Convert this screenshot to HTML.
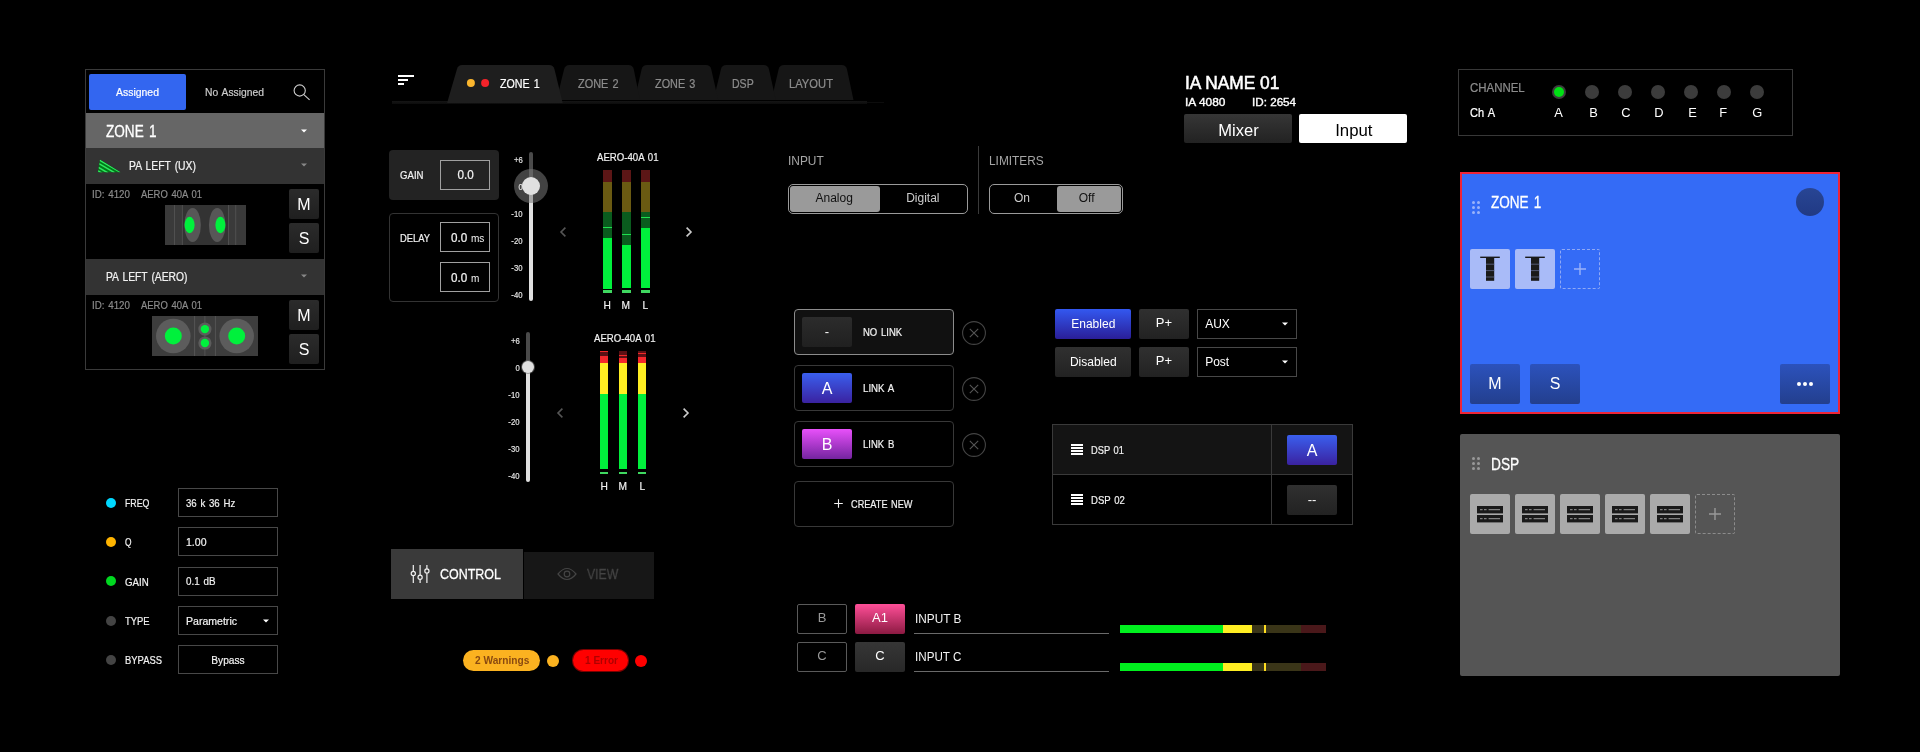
<!DOCTYPE html>
<html lang="en"><head><meta charset="utf-8"><title>Audio Control UI</title>
<style>
*{box-sizing:border-box;margin:0;padding:0}
html,body{width:1920px;height:752px;background:#000;overflow:hidden}
body{position:relative;font-family:"Liberation Sans",sans-serif;color:#fff}
#app{position:absolute;left:0;top:0;width:1920px;height:752px;overflow:hidden;will-change:transform}
#app div,#app span.t,#app svg{position:absolute}
span.t{white-space:pre;display:block}
</style></head><body><div id="app">
<div style="left:85px;top:69px;width:240px;height:301px;border:1px solid #3a3a3a;"></div>
<div style="left:89px;top:74px;width:97px;height:36px;background:#3366f0;border-radius:2px;"></div>
<span class="t" style="left:116.30px;top:82.00px;height:20px;line-height:20px;font-size:11.58px;color:#fff;transform:scaleX(0.9026);transform-origin:left center;-webkit-text-stroke:0.21px #fff;">Assigned</span>
<span class="t" style="left:204.50px;top:82.00px;height:20px;line-height:20px;font-size:11.58px;color:#ccc;word-spacing:1.27px;transform:scaleX(0.8900);transform-origin:left center;-webkit-text-stroke:0.21px #ccc;">No Assigned</span>
<svg style="left:290px;top:81px" width="24" height="24" viewBox="0 0 24 24"><circle cx="9.7" cy="9.5" r="5.6" fill="none" stroke="#ccc" stroke-width="1.1"/><path d="M13.8 13.6 L19.6 18.8" stroke="#ccc" stroke-width="1.1" fill="none"/></svg>
<div style="left:86px;top:113px;width:238px;height:35px;background:#666;"></div>
<span class="t" style="left:105.50px;top:121.00px;height:20px;line-height:20px;font-size:16.41px;color:#fff;word-spacing:1.81px;transform:scaleX(0.8268);transform-origin:left center;-webkit-text-stroke:0.30px #fff;">ZONE 1</span>
<svg style="left:299px;top:125.5px" width="10" height="10" viewBox="0 0 10 10"><path d="M2 3.5 L8 3.5 L5 6.5 Z" fill="#fff"/></svg>
<div style="left:86px;top:148px;width:238px;height:36px;background:#333;"></div>
<svg style="left:96px;top:158px" width="26" height="16" viewBox="96 158 26 16"><defs><clipPath id="tri"><path d="M100 159.6 L120.4 172.3 L98 172.3 Z"/></clipPath></defs><path d="M100 159.6 L120.4 172.3 L98 172.3 Z" fill="#007a18"/><g clip-path="url(#tri)" stroke="#2fe860" stroke-width="1.5"><path d="M99 159.8 L121 172.6"/><path d="M99 163.6 L114.5 172.6"/><path d="M98 167.2 L108 173"/><path d="M97 170.4 L102 173.2"/></g></svg>
<span class="t" style="left:128.50px;top:155.50px;height:20px;line-height:20px;font-size:12.54px;color:#f2f2f2;word-spacing:1.38px;transform:scaleX(0.8268);transform-origin:left center;-webkit-text-stroke:0.23px #f2f2f2;">PA LEFT (UX)</span>
<svg style="left:299px;top:160px" width="10" height="10" viewBox="0 0 10 10"><path d="M2 3.5 L8 3.5 L5 6.5 Z" fill="#888"/></svg>
<span class="t" style="left:91.50px;top:184.00px;height:20px;line-height:20px;font-size:10.62px;color:#8c8c8c;word-spacing:1.17px;transform:scaleX(0.9197);transform-origin:left center;-webkit-text-stroke:0.19px #8c8c8c;">ID: 4120</span>
<span class="t" style="left:141.30px;top:184.00px;height:20px;line-height:20px;font-size:10.62px;color:#8c8c8c;word-spacing:1.17px;transform:scaleX(0.8910);transform-origin:left center;-webkit-text-stroke:0.19px #8c8c8c;">AERO 40A 01</span>
<div style="left:289px;top:189px;width:30px;height:30px;background:linear-gradient(#2b2b2b,#1f1f1f);border-radius:2px;"></div>
<span class="t" style="left:297.34px;top:194.60px;height:20px;line-height:20px;font-size:16px;color:#fff;">M</span>
<div style="left:289px;top:223px;width:30px;height:30px;background:linear-gradient(#2b2b2b,#1f1f1f);border-radius:2px;"></div>
<span class="t" style="left:298.66px;top:228.60px;height:20px;line-height:20px;font-size:16px;color:#fff;">S</span>
<svg style="left:165px;top:205px" width="81" height="40" viewBox="165 205 81 40"><rect x="165" y="205" width="81" height="40" fill="#3a3a3a"/><rect x="182.4" y="205" width="46" height="40" fill="#333"/><g stroke="#555" stroke-width="0.8"><path d="M174.5 205V245M182.4 205V245M228.5 205V245M235.7 205V245"/></g><ellipse cx="192.6" cy="225" rx="8.3" ry="17" fill="#575757"/><ellipse cx="217.2" cy="225" rx="8.3" ry="17" fill="#575757"/><ellipse cx="189.6" cy="225" rx="5" ry="8.3" fill="#00f03c"/><ellipse cx="220.4" cy="225" rx="5" ry="8.3" fill="#00f03c"/></svg>
<div style="left:86px;top:259px;width:238px;height:36px;background:#333;"></div>
<span class="t" style="left:105.50px;top:266.50px;height:20px;line-height:20px;font-size:12.54px;color:#f2f2f2;word-spacing:1.38px;transform:scaleX(0.8219);transform-origin:left center;-webkit-text-stroke:0.23px #f2f2f2;">PA LEFT (AERO)</span>
<svg style="left:299px;top:271px" width="10" height="10" viewBox="0 0 10 10"><path d="M2 3.5 L8 3.5 L5 6.5 Z" fill="#888"/></svg>
<span class="t" style="left:91.50px;top:295.00px;height:20px;line-height:20px;font-size:10.62px;color:#8c8c8c;word-spacing:1.17px;transform:scaleX(0.9197);transform-origin:left center;-webkit-text-stroke:0.19px #8c8c8c;">ID: 4120</span>
<span class="t" style="left:141.30px;top:295.00px;height:20px;line-height:20px;font-size:10.62px;color:#8c8c8c;word-spacing:1.17px;transform:scaleX(0.8910);transform-origin:left center;-webkit-text-stroke:0.19px #8c8c8c;">AERO 40A 01</span>
<div style="left:289px;top:300px;width:30px;height:30px;background:linear-gradient(#2b2b2b,#1f1f1f);border-radius:2px;"></div>
<span class="t" style="left:297.34px;top:305.60px;height:20px;line-height:20px;font-size:16px;color:#fff;">M</span>
<div style="left:289px;top:334px;width:30px;height:30px;background:linear-gradient(#2b2b2b,#1f1f1f);border-radius:2px;"></div>
<span class="t" style="left:298.66px;top:339.60px;height:20px;line-height:20px;font-size:16px;color:#fff;">S</span>
<svg style="left:152px;top:316px" width="106" height="40" viewBox="152 316 106 40"><rect x="152" y="316" width="106" height="40" fill="#3d3d3d"/><g stroke="#5a5a5a" stroke-width="0.8"><path d="M194.6 316V356M204.9 316V356M215.4 316V356"/></g><circle cx="173.3" cy="336" r="17.3" fill="#5c5c5c"/><circle cx="236.7" cy="336" r="17.3" fill="#5c5c5c"/><circle cx="173.3" cy="336" r="8.5" fill="#00f03c"/><circle cx="236.7" cy="336" r="8.5" fill="#00f03c"/><circle cx="204.9" cy="329.1" r="6.6" fill="#5c5c5c"/><circle cx="204.9" cy="343" r="6.6" fill="#5c5c5c"/><circle cx="204.9" cy="329.1" r="4.2" fill="#00f03c"/><circle cx="204.9" cy="343" r="4.2" fill="#00f03c"/></svg>
<div style="left:106px;top:497.7px;width:10px;height:10px;background:#00d8ff;border-radius:50%;"></div>
<span class="t" style="left:125.40px;top:493.00px;height:20px;line-height:20px;font-size:11.58px;color:#f2f2f2;transform:scaleX(0.7585);transform-origin:left center;-webkit-text-stroke:0.21px #f2f2f2;">FREQ</span>
<div style="left:178px;top:488px;width:100px;height:29px;border:1px solid #484848;"></div>
<div style="left:106px;top:536.5px;width:10px;height:10px;background:#ffb400;border-radius:50%;"></div>
<span class="t" style="left:125.40px;top:531.80px;height:20px;line-height:20px;font-size:11.58px;color:#f2f2f2;transform:scaleX(0.7216);transform-origin:left center;-webkit-text-stroke:0.21px #f2f2f2;">Q</span>
<div style="left:178px;top:527px;width:100px;height:29px;border:1px solid #484848;"></div>
<div style="left:106px;top:576.2px;width:10px;height:10px;background:#00d820;border-radius:50%;"></div>
<span class="t" style="left:125.40px;top:571.50px;height:20px;line-height:20px;font-size:11.58px;color:#f2f2f2;transform:scaleX(0.8371);transform-origin:left center;-webkit-text-stroke:0.21px #f2f2f2;">GAIN</span>
<div style="left:178px;top:566.5px;width:100px;height:29px;border:1px solid #484848;"></div>
<div style="left:106px;top:615.6px;width:10px;height:10px;background:#444;border-radius:50%;"></div>
<span class="t" style="left:125.40px;top:610.90px;height:20px;line-height:20px;font-size:11.58px;color:#f2f2f2;transform:scaleX(0.8134);transform-origin:left center;-webkit-text-stroke:0.21px #f2f2f2;">TYPE</span>
<div style="left:178px;top:606px;width:100px;height:29px;border:1px solid #484848;"></div>
<div style="left:106px;top:654.6px;width:10px;height:10px;background:#444;border-radius:50%;"></div>
<span class="t" style="left:125.40px;top:649.90px;height:20px;line-height:20px;font-size:11.58px;color:#f2f2f2;transform:scaleX(0.8135);transform-origin:left center;-webkit-text-stroke:0.21px #f2f2f2;">BYPASS</span>
<div style="left:178px;top:645px;width:100px;height:29px;border:1px solid #484848;"></div>
<span class="t" style="left:186.40px;top:492.50px;height:20px;line-height:20px;font-size:11.58px;color:#f2f2f2;word-spacing:1.27px;transform:scaleX(0.8316);transform-origin:left center;-webkit-text-stroke:0.21px #f2f2f2;">36 k 36 Hz</span>
<span class="t" style="left:186.40px;top:531.50px;height:20px;line-height:20px;font-size:11.58px;color:#f2f2f2;transform:scaleX(0.9096);transform-origin:left center;-webkit-text-stroke:0.21px #f2f2f2;">1.00</span>
<span class="t" style="left:186.40px;top:570.50px;height:20px;line-height:20px;font-size:11.58px;color:#f2f2f2;word-spacing:1.27px;transform:scaleX(0.8489);transform-origin:left center;-webkit-text-stroke:0.21px #f2f2f2;">0.1 dB</span>
<span class="t" style="left:186.40px;top:610.50px;height:20px;line-height:20px;font-size:11.58px;color:#f2f2f2;transform:scaleX(0.9110);transform-origin:left center;-webkit-text-stroke:0.21px #f2f2f2;">Parametric</span>
<svg style="left:261px;top:615.5px" width="10" height="10" viewBox="0 0 10 10"><path d="M2 3.5 L8 3.5 L5 6.5 Z" fill="#fff"/></svg>
<span class="t" style="left:208.71px;top:649.80px;height:20px;line-height:20px;font-size:11.58px;color:#f2f2f2;transform:scaleX(0.8795);transform-origin:center center;-webkit-text-stroke:0.21px #f2f2f2;">Bypass</span>
<div style="left:398px;top:75px;width:16px;height:2px;background:#fff;"></div>
<div style="left:398px;top:79px;width:10px;height:2px;background:#fff;"></div>
<div style="left:398px;top:83px;width:5.5px;height:2px;background:#fff;"></div>
<div style="left:392px;top:101px;width:475px;height:3px;background:linear-gradient(#151515,#0c0c0c);"></div>
<div style="left:867px;top:102px;width:17px;height:1px;background:#0c0c0c;"></div>
<svg style="left:440px;top:60px" width="430" height="50" viewBox="440 60 430 50"><path d="M771.5 100 L778.6999999999999 69 Q779.9 65 783.9 65 L841.7 65 Q845.7 65 846.9000000000001 69 L853.5 100 Z" fill="#161616"/><path d="M713.5 100 L721.0 69 Q722.2 65 726.2 65 L763.7 65 Q767.7 65 768.9000000000001 69 L775.8 100 Z" fill="#161616"/><path d="M634.5 100 L641.6999999999999 69 Q642.9 65 646.9 65 L706 65 Q710 65 711.2 69 L718.2 100 Z" fill="#161616"/><path d="M556.5 100 L564.1999999999999 69 Q565.4 65 569.4 65 L628.5 65 Q632.5 65 633.7 69 L640 100 Z" fill="#161616"/><path d="M447.1 103 L457.0 69 Q458.2 65 462.2 65 L549.2 65 Q553.2 65 554.4000000000001 69 L562.7 103 Z" fill="#1e1e1e"/><circle cx="470.9" cy="83.1" r="4" fill="#fbb62e"/><circle cx="485.1" cy="83.1" r="4" fill="#f4232a"/></svg>
<span class="t" style="left:500.30px;top:73.70px;height:20px;line-height:20px;font-size:12.54px;color:#fff;word-spacing:1.38px;transform:scaleX(0.8506);transform-origin:left center;-webkit-text-stroke:0.23px #fff;">ZONE 1</span>
<span class="t" style="left:578.30px;top:73.70px;height:20px;line-height:20px;font-size:12.54px;color:#8c8c8c;word-spacing:1.38px;transform:scaleX(0.8720);transform-origin:left center;-webkit-text-stroke:0.23px #8c8c8c;">ZONE 2</span>
<span class="t" style="left:655.10px;top:73.70px;height:20px;line-height:20px;font-size:12.54px;color:#8c8c8c;word-spacing:1.38px;transform:scaleX(0.8656);transform-origin:left center;-webkit-text-stroke:0.23px #8c8c8c;">ZONE 3</span>
<span class="t" style="left:732.40px;top:73.70px;height:20px;line-height:20px;font-size:12.54px;color:#8c8c8c;transform:scaleX(0.8416);transform-origin:left center;-webkit-text-stroke:0.23px #8c8c8c;">DSP</span>
<span class="t" style="left:789.40px;top:73.70px;height:20px;line-height:20px;font-size:12.54px;color:#8c8c8c;transform:scaleX(0.8935);transform-origin:left center;-webkit-text-stroke:0.23px #8c8c8c;">LAYOUT</span>
<div style="left:389px;top:150px;width:110px;height:50px;background:#232323;border-radius:4px;"></div>
<span class="t" style="left:399.50px;top:165.00px;height:20px;line-height:20px;font-size:11.58px;color:#f2f2f2;transform:scaleX(0.8301);transform-origin:left center;-webkit-text-stroke:0.21px #f2f2f2;">GAIN</span>
<div style="left:440px;top:160px;width:50px;height:30px;border:1px solid #a0a0a0;"></div>
<span class="t" style="left:456.58px;top:165.00px;height:20px;line-height:20px;font-size:12.54px;color:#f2f2f2;transform:scaleX(0.9293);transform-origin:center center;-webkit-text-stroke:0.23px #f2f2f2;">0.0</span>
<div style="left:389px;top:213px;width:110px;height:89px;border:1px solid #333;border-radius:4px;"></div>
<span class="t" style="left:399.50px;top:228.00px;height:20px;line-height:20px;font-size:11.58px;color:#f2f2f2;transform:scaleX(0.8083);transform-origin:left center;-webkit-text-stroke:0.21px #f2f2f2;">DELAY</span>
<div style="left:440px;top:222px;width:50px;height:30px;border:1px solid #a0a0a0;"></div>
<div style="left:440px;top:262px;width:50px;height:30px;border:1px solid #a0a0a0;"></div>
<span class="t" style="left:451.20px;top:227.50px;height:20px;line-height:20px;font-size:12.54px;color:#f2f2f2;transform:scaleX(0.9293);transform-origin:left center;-webkit-text-stroke:0.23px #f2f2f2;">0.0</span>
<span class="t" style="left:471.00px;top:228.50px;height:20px;line-height:20px;font-size:10px;color:#f2f2f2;transform:scaleX(1.0052);transform-origin:left center;">ms</span>
<span class="t" style="left:451.20px;top:267.50px;height:20px;line-height:20px;font-size:12.54px;color:#f2f2f2;transform:scaleX(0.9293);transform-origin:left center;-webkit-text-stroke:0.23px #f2f2f2;">0.0</span>
<span class="t" style="left:471.00px;top:268.50px;height:20px;line-height:20px;font-size:10px;color:#f2f2f2;">m</span>
<div style="left:529px;top:152px;width:4px;height:34px;background:#4a4a4a;border-radius:2px 2px 0 0;"></div>
<div style="left:529px;top:186px;width:4px;height:115px;background:#e0e0e0;border-radius:0 0 2px 2px;"></div>
<div style="left:514px;top:169px;width:34px;height:34px;background:rgba(120,120,120,.55);border-radius:50%;"></div>
<div style="left:522px;top:177px;width:18px;height:18px;background:#e0e0e0;border-radius:50%;"></div>
<span class="t" style="left:513.09px;top:150.00px;height:20px;line-height:20px;font-size:8.69px;color:#e6e6e6;transform:scaleX(0.8907);transform-origin:right center;-webkit-text-stroke:0.16px #e6e6e6;">+6</span>
<span class="t" style="left:518.17px;top:176.50px;height:20px;line-height:20px;font-size:8.69px;color:#e6e6e6;transform:scaleX(0.8907);transform-origin:right center;-webkit-text-stroke:0.16px #e6e6e6;">0</span>
<span class="t" style="left:510.44px;top:204.00px;height:20px;line-height:20px;font-size:8.69px;color:#e6e6e6;transform:scaleX(0.8907);transform-origin:right center;-webkit-text-stroke:0.16px #e6e6e6;">-10</span>
<span class="t" style="left:510.44px;top:231.00px;height:20px;line-height:20px;font-size:8.69px;color:#e6e6e6;transform:scaleX(0.8907);transform-origin:right center;-webkit-text-stroke:0.16px #e6e6e6;">-20</span>
<span class="t" style="left:510.44px;top:258.00px;height:20px;line-height:20px;font-size:8.69px;color:#e6e6e6;transform:scaleX(0.8907);transform-origin:right center;-webkit-text-stroke:0.16px #e6e6e6;">-30</span>
<span class="t" style="left:510.44px;top:285.00px;height:20px;line-height:20px;font-size:8.69px;color:#e6e6e6;transform:scaleX(0.8907);transform-origin:right center;-webkit-text-stroke:0.16px #e6e6e6;">-40</span>
<div style="left:526px;top:332px;width:4px;height:35.30000000000001px;background:#4a4a4a;border-radius:2px 2px 0 0;"></div>
<div style="left:526px;top:367.3px;width:4px;height:114.69999999999999px;background:#e0e0e0;border-radius:0 0 2px 2px;"></div>
<div style="left:522px;top:361.3px;width:12px;height:12px;background:#e0e0e0;border-radius:50%;box-shadow:0 0 0 1px rgba(120,120,120,.6);"></div>
<span class="t" style="left:510.09px;top:331.00px;height:20px;line-height:20px;font-size:8.69px;color:#e6e6e6;transform:scaleX(0.8907);transform-origin:right center;-webkit-text-stroke:0.16px #e6e6e6;">+6</span>
<span class="t" style="left:515.17px;top:358.00px;height:20px;line-height:20px;font-size:8.69px;color:#e6e6e6;transform:scaleX(0.8907);transform-origin:right center;-webkit-text-stroke:0.16px #e6e6e6;">0</span>
<span class="t" style="left:507.44px;top:385.00px;height:20px;line-height:20px;font-size:8.69px;color:#e6e6e6;transform:scaleX(0.8907);transform-origin:right center;-webkit-text-stroke:0.16px #e6e6e6;">-10</span>
<span class="t" style="left:507.44px;top:412.00px;height:20px;line-height:20px;font-size:8.69px;color:#e6e6e6;transform:scaleX(0.8907);transform-origin:right center;-webkit-text-stroke:0.16px #e6e6e6;">-20</span>
<span class="t" style="left:507.44px;top:439.00px;height:20px;line-height:20px;font-size:8.69px;color:#e6e6e6;transform:scaleX(0.8907);transform-origin:right center;-webkit-text-stroke:0.16px #e6e6e6;">-30</span>
<span class="t" style="left:507.44px;top:466.00px;height:20px;line-height:20px;font-size:8.69px;color:#e6e6e6;transform:scaleX(0.8907);transform-origin:right center;-webkit-text-stroke:0.16px #e6e6e6;">-40</span>
<span class="t" style="left:597.00px;top:147.20px;height:20px;line-height:20px;font-size:11.58px;color:#f2f2f2;word-spacing:1.27px;transform:scaleX(0.8310);transform-origin:left center;-webkit-text-stroke:0.21px #f2f2f2;">AERO-40A 01</span>
<div style="left:603px;top:170px;width:8.5px;height:12px;background:#5c1616;"></div>
<div style="left:603px;top:182px;width:8.5px;height:30px;background:#6a5a12;"></div>
<div style="left:603px;top:212px;width:8.5px;height:26px;background:#0a5c1e;"></div>
<div style="left:603px;top:238px;width:8.5px;height:50.5px;background:#00f03c;"></div>
<div style="left:603px;top:226.8px;width:8.5px;height:1.2px;background:#1fe050;"></div>
<div style="left:603px;top:290.3px;width:8.5px;height:2.8px;background:#3fd860;"></div>
<div style="left:622px;top:170px;width:8.5px;height:12px;background:#5c1616;"></div>
<div style="left:622px;top:182px;width:8.5px;height:30px;background:#6a5a12;"></div>
<div style="left:622px;top:212px;width:8.5px;height:32.599999999999994px;background:#0a5c1e;"></div>
<div style="left:622px;top:244.6px;width:8.5px;height:43.900000000000006px;background:#00f03c;"></div>
<div style="left:622px;top:233.70000000000002px;width:8.5px;height:1.2px;background:#1fe050;"></div>
<div style="left:622px;top:290.3px;width:8.5px;height:2.8px;background:#3fd860;"></div>
<div style="left:641px;top:170px;width:8.5px;height:12px;background:#5c1616;"></div>
<div style="left:641px;top:182px;width:8.5px;height:30px;background:#6a5a12;"></div>
<div style="left:641px;top:212px;width:8.5px;height:15.800000000000011px;background:#0a5c1e;"></div>
<div style="left:641px;top:227.8px;width:8.5px;height:60.69999999999999px;background:#00f03c;"></div>
<div style="left:641px;top:216.70000000000002px;width:8.5px;height:1.2px;background:#1fe050;"></div>
<div style="left:641px;top:290.3px;width:8.5px;height:2.8px;background:#3fd860;"></div>
<span class="t" style="left:602.82px;top:295.20px;height:20px;line-height:20px;font-size:11.58px;color:#f2f2f2;transform:scaleX(0.8808);transform-origin:center center;-webkit-text-stroke:0.21px #f2f2f2;">H</span>
<span class="t" style="left:621.38px;top:295.20px;height:20px;line-height:20px;font-size:11.58px;color:#f2f2f2;transform:scaleX(0.8808);transform-origin:center center;-webkit-text-stroke:0.21px #f2f2f2;">M</span>
<span class="t" style="left:642.38px;top:295.20px;height:20px;line-height:20px;font-size:11.58px;color:#f2f2f2;transform:scaleX(0.8808);transform-origin:center center;-webkit-text-stroke:0.21px #f2f2f2;">L</span>
<svg style="left:555px;top:223.5px" width="16" height="16" viewBox="-8 -8 16 16"><path d="M2.4 -4.4 L-2 0 L2.4 4.4" fill="none" stroke="#555" stroke-width="1.6"/></svg>
<svg style="left:681px;top:223.5px" width="16" height="16" viewBox="-8 -8 16 16"><path d="M-2.4 -4.4 L2 0 L-2.4 4.4" fill="none" stroke="#ccc" stroke-width="1.6"/></svg>
<span class="t" style="left:594.10px;top:328.00px;height:20px;line-height:20px;font-size:11.58px;color:#f2f2f2;word-spacing:1.27px;transform:scaleX(0.8310);transform-origin:left center;-webkit-text-stroke:0.21px #f2f2f2;">AERO-40A 01</span>
<div style="left:600px;top:350.6px;width:8.2px;height:12px;background:#5c1014;"></div>
<div style="left:600px;top:350.9px;width:8.2px;height:1.2px;background:#f02828;"></div>
<div style="left:600px;top:356px;width:8.2px;height:6.800000000000011px;background:#f4282c;"></div>
<div style="left:600px;top:362.8px;width:8.2px;height:31.4px;background:#ffee22;"></div>
<div style="left:600px;top:394.2px;width:8.2px;height:74.8px;background:#00f03c;"></div>
<div style="left:600px;top:471.5px;width:8.2px;height:2.8px;background:#3fd860;"></div>
<div style="left:619px;top:350.6px;width:8.2px;height:12px;background:#5c1014;"></div>
<div style="left:619px;top:354.7px;width:8.2px;height:1.2px;background:#f02828;"></div>
<div style="left:619px;top:358.3px;width:8.2px;height:4.5px;background:#f4282c;"></div>
<div style="left:619px;top:362.8px;width:8.2px;height:31.4px;background:#ffee22;"></div>
<div style="left:619px;top:394.2px;width:8.2px;height:74.8px;background:#00f03c;"></div>
<div style="left:619px;top:471.5px;width:8.2px;height:2.8px;background:#3fd860;"></div>
<div style="left:638px;top:350.6px;width:8.2px;height:12px;background:#5c1014;"></div>
<div style="left:638px;top:352.59999999999997px;width:8.2px;height:1.2px;background:#f02828;"></div>
<div style="left:638px;top:357px;width:8.2px;height:5.800000000000011px;background:#f4282c;"></div>
<div style="left:638px;top:362.8px;width:8.2px;height:31.4px;background:#ffee22;"></div>
<div style="left:638px;top:394.2px;width:8.2px;height:74.8px;background:#00f03c;"></div>
<div style="left:638px;top:471.5px;width:8.2px;height:2.8px;background:#3fd860;"></div>
<span class="t" style="left:600.02px;top:475.80px;height:20px;line-height:20px;font-size:11.58px;color:#f2f2f2;transform:scaleX(0.8808);transform-origin:center center;-webkit-text-stroke:0.21px #f2f2f2;">H</span>
<span class="t" style="left:618.48px;top:475.80px;height:20px;line-height:20px;font-size:11.58px;color:#f2f2f2;transform:scaleX(0.8808);transform-origin:center center;-webkit-text-stroke:0.21px #f2f2f2;">M</span>
<span class="t" style="left:639.48px;top:475.80px;height:20px;line-height:20px;font-size:11.58px;color:#f2f2f2;transform:scaleX(0.8808);transform-origin:center center;-webkit-text-stroke:0.21px #f2f2f2;">L</span>
<svg style="left:552px;top:404.6px" width="16" height="16" viewBox="-8 -8 16 16"><path d="M2.4 -4.4 L-2 0 L2.4 4.4" fill="none" stroke="#555" stroke-width="1.6"/></svg>
<svg style="left:678.3px;top:404.6px" width="16" height="16" viewBox="-8 -8 16 16"><path d="M-2.4 -4.4 L2 0 L-2.4 4.4" fill="none" stroke="#ccc" stroke-width="1.6"/></svg>
<div style="left:391px;top:549px;width:132px;height:50px;background:#3a3a3a;"></div>
<div style="left:524px;top:552px;width:130px;height:46.5px;background:#171717;"></div>
<svg style="left:408px;top:562px" width="24" height="24" viewBox="408 562 24 24"><g stroke="#f2f2f2" stroke-width="1.2" fill="none"><path d="M413.3 565V571.3M413.3 575.7V583M420.1 565V575.1M420.1 579.5V583M426.9 565V568.8M426.9 573.2V583"/><circle cx="413.3" cy="573.5" r="2.1"/><circle cx="420.1" cy="577.3" r="2.1"/><circle cx="426.9" cy="571" r="2.1"/></g></svg>
<span class="t" style="left:439.80px;top:564.40px;height:20px;line-height:20px;font-size:15.44px;color:#fff;transform:scaleX(0.8081);transform-origin:left center;-webkit-text-stroke:0.28px #fff;">CONTROL</span>
<svg style="left:555px;top:564px" width="24" height="20" viewBox="555 564 24 20"><g stroke="#444" stroke-width="1.2" fill="none"><path d="M558 574 Q567 563 576 574 Q567 585 558 574 Z"/><circle cx="567" cy="574" r="2.8"/></g></svg>
<span class="t" style="left:586.80px;top:564.40px;height:20px;line-height:20px;font-size:15.44px;color:#444;transform:scaleX(0.7907);transform-origin:left center;-webkit-text-stroke:0.28px #444;">VIEW</span>
<div style="left:463px;top:650px;width:77px;height:21px;background:#fbb220;border-radius:10.5px;"></div>
<span class="t" style="left:474.70px;top:650.10px;height:20px;line-height:20px;font-size:11px;color:#8a4a10;font-weight:700;transform:scaleX(0.9222);transform-origin:left center;">2 Warnings</span>
<div style="left:547px;top:654.7px;width:12px;height:12px;background:#fbb220;border-radius:50%;"></div>
<div style="left:573px;top:650px;width:55px;height:21px;background:#ff0000;border-radius:10.5px;box-shadow:0 0 0 1px #7a0000;"></div>
<span class="t" style="left:584.50px;top:650.10px;height:20px;line-height:20px;font-size:11px;color:#b00000;font-weight:700;transform:scaleX(0.9148);transform-origin:left center;">1 Error</span>
<div style="left:635px;top:654.7px;width:12px;height:12px;background:#ff0000;border-radius:50%;"></div>
<span class="t" style="left:788.10px;top:150.60px;height:20px;line-height:20px;font-size:12px;color:#a6a6a6;transform:scaleX(0.9917);transform-origin:left center;">INPUT</span>
<div style="left:788px;top:184px;width:180px;height:30px;border:1px solid #9a9a9a;border-radius:5px;"></div>
<div style="left:790px;top:186px;width:90px;height:26px;background:#9a9a9a;border-radius:3px;"></div>
<span class="t" style="left:815.52px;top:187.60px;height:20px;line-height:20px;font-size:12px;color:#111;">Analog</span>
<span class="t" style="left:906.13px;top:187.60px;height:20px;line-height:20px;font-size:12px;color:#ccc;">Digital</span>
<div style="left:978px;top:146px;width:1px;height:68px;background:#3a3a3a;"></div>
<span class="t" style="left:989.30px;top:150.60px;height:20px;line-height:20px;font-size:12px;color:#a6a6a6;transform:scaleX(0.9884);transform-origin:left center;">LIMITERS</span>
<div style="left:989px;top:184px;width:134px;height:30px;border:1px solid #9a9a9a;border-radius:5px;"></div>
<div style="left:1057px;top:186px;width:64px;height:26px;background:#9a9a9a;border-radius:3px;"></div>
<span class="t" style="left:1014.00px;top:187.60px;height:20px;line-height:20px;font-size:12px;color:#ccc;">On</span>
<span class="t" style="left:1078.71px;top:187.60px;height:20px;line-height:20px;font-size:12px;color:#111;">Off</span>
<span class="t" style="left:1184.50px;top:72.60px;height:20px;line-height:20px;font-size:18px;color:#fff;transform:scaleX(0.9628);transform-origin:left center;-webkit-text-stroke:0.55px #fff;">IA NAME 01</span>
<span class="t" style="left:1184.50px;top:92.10px;height:20px;line-height:20px;font-size:11px;color:#fff;transform:scaleX(1.0827);transform-origin:left center;-webkit-text-stroke:0.35px #fff;">IA 4080</span>
<span class="t" style="left:1252.00px;top:92.10px;height:20px;line-height:20px;font-size:11px;color:#fff;transform:scaleX(1.0605);transform-origin:left center;-webkit-text-stroke:0.35px #fff;">ID: 2654</span>
<div style="left:1184px;top:114px;width:108px;height:29px;background:linear-gradient(#363636,#222);border-radius:2px;"></div>
<span class="t" style="left:1219.05px;top:120.90px;height:20px;line-height:20px;font-size:16px;color:#fff;transform:scaleX(1.0330);transform-origin:center center;">Mixer</span>
<div style="left:1299px;top:114px;width:108px;height:29px;background:#fff;border-radius:2px;"></div>
<span class="t" style="left:1335.61px;top:120.90px;height:20px;line-height:20px;font-size:16px;color:#000;transform:scaleX(1.0482);transform-origin:center center;">Input</span>
<div style="left:794px;top:309px;width:160px;height:46px;border:1px solid #8c8c8c;border-radius:4px;background:#111;"></div>
<div style="left:802px;top:317px;width:50px;height:30px;background:linear-gradient(#2c2c2c,#202020);border-radius:2px;"></div>
<span class="t" style="left:824.84px;top:322.00px;height:20px;line-height:20px;font-size:13px;color:#fff;">-</span>
<span class="t" style="left:862.70px;top:321.80px;height:20px;line-height:20px;font-size:11.58px;color:#f2f2f2;word-spacing:1.27px;transform:scaleX(0.8214);transform-origin:left center;-webkit-text-stroke:0.21px #f2f2f2;">NO LINK</span>
<svg style="left:960px;top:319px" width="28" height="28" viewBox="-14 -14 28 28"><circle r="11.4" fill="none" stroke="#444" stroke-width="1.1"/><path d="M-4.2 -4.2L4.2 4.2M4.2 -4.2L-4.2 4.2" stroke="#555" stroke-width="1.1"/></svg>
<div style="left:794px;top:365px;width:160px;height:46px;border:1px solid #383838;border-radius:4px;"></div>
<div style="left:802px;top:373px;width:50px;height:30px;background:linear-gradient(#3a5fee,#3a22a0);border-radius:2px;"></div>
<span class="t" style="left:821.66px;top:379.00px;height:20px;line-height:20px;font-size:16px;color:#fff;">A</span>
<span class="t" style="left:862.70px;top:377.80px;height:20px;line-height:20px;font-size:11.58px;color:#f2f2f2;word-spacing:1.27px;transform:scaleX(0.8388);transform-origin:left center;-webkit-text-stroke:0.21px #f2f2f2;">LINK A</span>
<svg style="left:960px;top:375px" width="28" height="28" viewBox="-14 -14 28 28"><circle r="11.4" fill="none" stroke="#444" stroke-width="1.1"/><path d="M-4.2 -4.2L4.2 4.2M4.2 -4.2L-4.2 4.2" stroke="#555" stroke-width="1.1"/></svg>
<div style="left:794px;top:421px;width:160px;height:46px;border:1px solid #383838;border-radius:4px;"></div>
<div style="left:802px;top:429px;width:50px;height:30px;background:linear-gradient(#e850fa,#7424a0);border-radius:2px;"></div>
<span class="t" style="left:821.66px;top:435.00px;height:20px;line-height:20px;font-size:16px;color:#fff;">B</span>
<span class="t" style="left:862.70px;top:433.80px;height:20px;line-height:20px;font-size:11.58px;color:#f2f2f2;word-spacing:1.27px;transform:scaleX(0.8247);transform-origin:left center;-webkit-text-stroke:0.21px #f2f2f2;">LINK B</span>
<svg style="left:960px;top:431px" width="28" height="28" viewBox="-14 -14 28 28"><circle r="11.4" fill="none" stroke="#444" stroke-width="1.1"/><path d="M-4.2 -4.2L4.2 4.2M4.2 -4.2L-4.2 4.2" stroke="#555" stroke-width="1.1"/></svg>
<div style="left:794px;top:481px;width:160px;height:46px;border:1px solid #383838;border-radius:4px;"></div>
<svg style="left:832px;top:497px" width="14" height="14" viewBox="0 0 14 14"><path d="M6.5 2.2V10.8M2.2 6.5H10.8" stroke="#f2f2f2" stroke-width="1.1" fill="none"/></svg>
<span class="t" style="left:850.70px;top:493.60px;height:20px;line-height:20px;font-size:11.58px;color:#f2f2f2;word-spacing:1.27px;transform:scaleX(0.7924);transform-origin:left center;-webkit-text-stroke:0.21px #f2f2f2;">CREATE NEW</span>
<div style="left:1055px;top:309px;width:76px;height:30px;background:linear-gradient(#3358f0,#2a1e98);border-radius:2px;"></div>
<span class="t" style="left:1071.28px;top:313.60px;height:20px;line-height:20px;font-size:12px;color:#fff;">Enabled</span>
<div style="left:1139px;top:309px;width:50px;height:30px;background:linear-gradient(#303030,#222);border-radius:2px;"></div>
<span class="t" style="left:1155.87px;top:312.80px;height:20px;line-height:20px;font-size:13px;color:#fff;">P+</span>
<div style="left:1197px;top:309px;width:100px;height:30px;border:1px solid #484848;"></div>
<span class="t" style="left:1205.20px;top:313.60px;height:20px;line-height:20px;font-size:12px;color:#fff;">AUX</span>
<svg style="left:1280px;top:319.4px" width="10" height="10" viewBox="0 0 10 10"><path d="M2 3.5 L8 3.5 L5 6.5 Z" fill="#fff"/></svg>
<div style="left:1055px;top:347px;width:76px;height:30px;background:linear-gradient(#303030,#222);border-radius:2px;"></div>
<span class="t" style="left:1069.95px;top:351.60px;height:20px;line-height:20px;font-size:12px;color:#fff;">Disabled</span>
<div style="left:1139px;top:347px;width:50px;height:30px;background:linear-gradient(#303030,#222);border-radius:2px;"></div>
<span class="t" style="left:1155.87px;top:350.80px;height:20px;line-height:20px;font-size:13px;color:#fff;">P+</span>
<div style="left:1197px;top:347px;width:100px;height:30px;border:1px solid #484848;"></div>
<span class="t" style="left:1205.20px;top:351.60px;height:20px;line-height:20px;font-size:12px;color:#fff;">Post</span>
<svg style="left:1280px;top:357.4px" width="10" height="10" viewBox="0 0 10 10"><path d="M2 3.5 L8 3.5 L5 6.5 Z" fill="#fff"/></svg>
<div style="left:1052px;top:424px;width:301px;height:101px;border:1px solid #3a3a3a;"></div>
<div style="left:1053px;top:425px;width:299px;height:49px;background:#141414;"></div>
<div style="left:1053px;top:474px;width:299px;height:1px;background:#3a3a3a;"></div>
<div style="left:1271px;top:425px;width:1px;height:99px;background:#3a3a3a;"></div>
<div style="left:1071px;top:444px;width:12px;height:2px;background:#fff;"></div>
<div style="left:1071px;top:447px;width:12px;height:2px;background:#fff;"></div>
<div style="left:1071px;top:450px;width:12px;height:2px;background:#fff;"></div>
<div style="left:1071px;top:453px;width:12px;height:2px;background:#fff;"></div>
<span class="t" style="left:1091.20px;top:440.00px;height:20px;line-height:20px;font-size:11.58px;color:#f2f2f2;word-spacing:1.27px;transform:scaleX(0.8055);transform-origin:left center;-webkit-text-stroke:0.21px #f2f2f2;">DSP 01</span>
<div style="left:1071px;top:494px;width:12px;height:2px;background:#fff;"></div>
<div style="left:1071px;top:497px;width:12px;height:2px;background:#fff;"></div>
<div style="left:1071px;top:500px;width:12px;height:2px;background:#fff;"></div>
<div style="left:1071px;top:503px;width:12px;height:2px;background:#fff;"></div>
<span class="t" style="left:1091.20px;top:490.00px;height:20px;line-height:20px;font-size:11.58px;color:#f2f2f2;word-spacing:1.27px;transform:scaleX(0.8250);transform-origin:left center;-webkit-text-stroke:0.21px #f2f2f2;">DSP 02</span>
<div style="left:1287px;top:435px;width:50px;height:30px;background:linear-gradient(#3a5fee,#3a22a0);border-radius:2px;"></div>
<span class="t" style="left:1306.66px;top:441.00px;height:20px;line-height:20px;font-size:16px;color:#fff;">A</span>
<div style="left:1287px;top:485px;width:50px;height:30px;background:linear-gradient(#303030,#222);border-radius:2px;"></div>
<span class="t" style="left:1307.67px;top:489.60px;height:20px;line-height:20px;font-size:13px;color:#fff;">--</span>
<div style="left:797px;top:604px;width:50px;height:30px;border:1px solid #5a5a5a;border-radius:2px;"></div>
<span class="t" style="left:817.66px;top:608.00px;height:20px;line-height:20px;font-size:13px;color:#999;">B</span>
<div style="left:855px;top:604px;width:50px;height:30px;background:linear-gradient(#ff4f98,#8c1a42);border-radius:2px;"></div>
<span class="t" style="left:872.05px;top:608.00px;height:20px;line-height:20px;font-size:13px;color:#fff;">A1</span>
<span class="t" style="left:915.30px;top:608.50px;height:20px;line-height:20px;font-size:12px;color:#f2f2f2;transform:scaleX(0.9847);transform-origin:left center;">INPUT B</span>
<div style="left:914px;top:633px;width:195px;height:1px;background:#6a6a6a;"></div>
<div style="left:1120px;top:625px;width:103px;height:8px;background:#00f01e;"></div>
<div style="left:1223px;top:625px;width:29px;height:8px;background:#ffee22;"></div>
<div style="left:1252px;top:625px;width:49px;height:8px;background:#3a3518;"></div>
<div style="left:1301px;top:625px;width:25px;height:8px;background:#4a181a;"></div>
<div style="left:1264px;top:625px;width:1.6px;height:8px;background:#ffdd22;"></div>
<div style="left:797px;top:642px;width:50px;height:30px;border:1px solid #5a5a5a;border-radius:2px;"></div>
<span class="t" style="left:817.31px;top:646.00px;height:20px;line-height:20px;font-size:13px;color:#999;">C</span>
<div style="left:855px;top:642px;width:50px;height:30px;background:linear-gradient(#363636,#282828);border-radius:2px;"></div>
<span class="t" style="left:875.31px;top:646.00px;height:20px;line-height:20px;font-size:13px;color:#fff;">C</span>
<span class="t" style="left:915.30px;top:646.50px;height:20px;line-height:20px;font-size:12px;color:#f2f2f2;transform:scaleX(0.9710);transform-origin:left center;">INPUT C</span>
<div style="left:914px;top:671px;width:195px;height:1px;background:#6a6a6a;"></div>
<div style="left:1120px;top:663px;width:103px;height:8px;background:#00f01e;"></div>
<div style="left:1223px;top:663px;width:29px;height:8px;background:#ffee22;"></div>
<div style="left:1252px;top:663px;width:49px;height:8px;background:#3a3518;"></div>
<div style="left:1301px;top:663px;width:25px;height:8px;background:#4a181a;"></div>
<div style="left:1264px;top:663px;width:1.6px;height:8px;background:#ffdd22;"></div>
<div style="left:1458px;top:69px;width:335px;height:67px;border:1px solid #383838;"></div>
<span class="t" style="left:1470.30px;top:78.40px;height:20px;line-height:20px;font-size:13.51px;color:#8c8c8c;transform:scaleX(0.8472);transform-origin:left center;-webkit-text-stroke:0.24px #8c8c8c;">CHANNEL</span>
<span class="t" style="left:1470.30px;top:103.30px;height:20px;line-height:20px;font-size:13.51px;color:#fff;word-spacing:1.49px;transform:scaleX(0.8155);transform-origin:left center;-webkit-text-stroke:0.24px #fff;">Ch A</span>
<div style="left:1552.1px;top:84.8px;width:14.4px;height:14.4px;background:#3c3c3c;border-radius:50%;"></div>
<div style="left:1554.3px;top:87px;width:10px;height:10px;background:#00e014;border-radius:50%;"></div>
<span class="t" style="left:1554.49px;top:103.30px;height:20px;line-height:20px;font-size:13.51px;color:#fff;transform:scaleX(0.9534);transform-origin:center center;">A</span>
<div style="left:1585.1px;top:84.8px;width:14.4px;height:14.4px;background:#3c3c3c;border-radius:50%;"></div>
<span class="t" style="left:1588.99px;top:103.30px;height:20px;line-height:20px;font-size:13.51px;color:#fff;transform:scaleX(0.9534);transform-origin:center center;">B</span>
<div style="left:1618.1px;top:84.8px;width:14.4px;height:14.4px;background:#3c3c3c;border-radius:50%;"></div>
<span class="t" style="left:1620.62px;top:103.30px;height:20px;line-height:20px;font-size:13.51px;color:#fff;transform:scaleX(0.9534);transform-origin:center center;">C</span>
<div style="left:1651.1px;top:84.8px;width:14.4px;height:14.4px;background:#3c3c3c;border-radius:50%;"></div>
<span class="t" style="left:1653.52px;top:103.30px;height:20px;line-height:20px;font-size:13.51px;color:#fff;transform:scaleX(0.9534);transform-origin:center center;">D</span>
<div style="left:1684.1px;top:84.8px;width:14.4px;height:14.4px;background:#3c3c3c;border-radius:50%;"></div>
<span class="t" style="left:1687.59px;top:103.30px;height:20px;line-height:20px;font-size:13.51px;color:#fff;transform:scaleX(0.9534);transform-origin:center center;">E</span>
<div style="left:1717.1px;top:84.8px;width:14.4px;height:14.4px;background:#3c3c3c;border-radius:50%;"></div>
<span class="t" style="left:1719.47px;top:103.30px;height:20px;line-height:20px;font-size:13.51px;color:#fff;transform:scaleX(0.9534);transform-origin:center center;">F</span>
<div style="left:1750.1px;top:84.8px;width:14.4px;height:14.4px;background:#3c3c3c;border-radius:50%;"></div>
<span class="t" style="left:1751.95px;top:103.30px;height:20px;line-height:20px;font-size:13.51px;color:#fff;transform:scaleX(0.9534);transform-origin:center center;">G</span>
<div style="left:1460px;top:172px;width:380px;height:242px;background:#346bf6;border:2px solid #ee2436;"></div>
<div style="left:1472.0px;top:201.1px;width:3px;height:3px;background:#9ab3fa;border-radius:50%;"></div>
<div style="left:1477.0px;top:201.1px;width:3px;height:3px;background:#9ab3fa;border-radius:50%;"></div>
<div style="left:1472.0px;top:206.1px;width:3px;height:3px;background:#9ab3fa;border-radius:50%;"></div>
<div style="left:1477.0px;top:206.1px;width:3px;height:3px;background:#9ab3fa;border-radius:50%;"></div>
<div style="left:1472.0px;top:211.1px;width:3px;height:3px;background:#9ab3fa;border-radius:50%;"></div>
<div style="left:1477.0px;top:211.1px;width:3px;height:3px;background:#9ab3fa;border-radius:50%;"></div>
<span class="t" style="left:1490.60px;top:191.90px;height:20px;line-height:20px;font-size:16.41px;color:#fff;word-spacing:1.81px;transform:scaleX(0.8251);transform-origin:left center;-webkit-text-stroke:0.30px #fff;">ZONE 1</span>
<div style="left:1796px;top:188px;width:28px;height:28px;background:linear-gradient(#284594,#213a84);border-radius:50%;"></div>
<div style="left:1470px;top:249px;width:40px;height:40px;background:#a9bbf8;border-radius:2px;"></div>
<svg style="left:1470px;top:249px" width="40" height="40" viewBox="0 0 40 40"><rect x="10.2" y="7.6" width="19.6" height="1.4" fill="#1a1a1a"/><rect x="16" y="9" width="8.2" height="22.8" fill="#1a1a1a"/><g stroke="#5a6280" stroke-width="0.9"><path d="M16 15.2H24.2M16 21.6H24.2M16 28H24.2"/></g></svg>
<div style="left:1515px;top:249px;width:40px;height:40px;background:#a9bbf8;border-radius:2px;"></div>
<svg style="left:1515px;top:249px" width="40" height="40" viewBox="0 0 40 40"><rect x="10.2" y="7.6" width="19.6" height="1.4" fill="#1a1a1a"/><rect x="16" y="9" width="8.2" height="22.8" fill="#1a1a1a"/><g stroke="#5a6280" stroke-width="0.9"><path d="M16 15.2H24.2M16 21.6H24.2M16 28H24.2"/></g></svg>
<div style="left:1560px;top:249px;width:40px;height:40px;border:1px dashed #8fa9f6;border-radius:2px;"></div>
<svg style="left:1572px;top:261px" width="16" height="16" viewBox="0 0 16 16"><path d="M8 2V14M2 8H14" stroke="#9ab3fa" stroke-width="1.4" fill="none"/></svg>
<div style="left:1470px;top:364px;width:50px;height:40px;background:linear-gradient(#2c52bc,#233f8e);border-radius:2px;"></div>
<span class="t" style="left:1488.34px;top:374.30px;height:20px;line-height:20px;font-size:16px;color:#fff;">M</span>
<div style="left:1530px;top:364px;width:50px;height:40px;background:linear-gradient(#2c52bc,#233f8e);border-radius:2px;"></div>
<span class="t" style="left:1549.66px;top:374.30px;height:20px;line-height:20px;font-size:16px;color:#fff;">S</span>
<div style="left:1780px;top:364px;width:50px;height:40px;background:linear-gradient(#2c52bc,#233f8e);border-radius:2px;"></div>
<div style="left:1796.5px;top:382px;width:4px;height:4px;background:#fff;border-radius:50%;"></div>
<div style="left:1802.8px;top:382px;width:4px;height:4px;background:#fff;border-radius:50%;"></div>
<div style="left:1809.1px;top:382px;width:4px;height:4px;background:#fff;border-radius:50%;"></div>
<div style="left:1460px;top:434px;width:380px;height:242px;background:#555;border-radius:2px;"></div>
<div style="left:1472.0px;top:457.2px;width:3px;height:3px;background:#999;border-radius:50%;"></div>
<div style="left:1477.0px;top:457.2px;width:3px;height:3px;background:#999;border-radius:50%;"></div>
<div style="left:1472.0px;top:462.2px;width:3px;height:3px;background:#999;border-radius:50%;"></div>
<div style="left:1477.0px;top:462.2px;width:3px;height:3px;background:#999;border-radius:50%;"></div>
<div style="left:1472.0px;top:467.2px;width:3px;height:3px;background:#999;border-radius:50%;"></div>
<div style="left:1477.0px;top:467.2px;width:3px;height:3px;background:#999;border-radius:50%;"></div>
<span class="t" style="left:1490.60px;top:453.70px;height:20px;line-height:20px;font-size:16.41px;color:#fff;transform:scaleX(0.8358);transform-origin:left center;-webkit-text-stroke:0.30px #fff;">DSP</span>
<div style="left:1470px;top:494px;width:40px;height:40px;background:#aaa;border-radius:2px;"></div>
<svg style="left:1470px;top:494px" width="40" height="40" viewBox="0 0 40 40"><rect x="7" y="12" width="26" height="7.4" fill="#1a1a1a"/><rect x="7" y="21" width="26" height="7.4" fill="#1a1a1a"/><g stroke="#bbb" stroke-width="0.8"><path d="M10 15.7H12.6M14 15.7H16.6M18.6 15.7H30M10 24.7H12.6M14 24.7H16.6M18.6 24.7H30"/></g></svg>
<div style="left:1515px;top:494px;width:40px;height:40px;background:#aaa;border-radius:2px;"></div>
<svg style="left:1515px;top:494px" width="40" height="40" viewBox="0 0 40 40"><rect x="7" y="12" width="26" height="7.4" fill="#1a1a1a"/><rect x="7" y="21" width="26" height="7.4" fill="#1a1a1a"/><g stroke="#bbb" stroke-width="0.8"><path d="M10 15.7H12.6M14 15.7H16.6M18.6 15.7H30M10 24.7H12.6M14 24.7H16.6M18.6 24.7H30"/></g></svg>
<div style="left:1560px;top:494px;width:40px;height:40px;background:#aaa;border-radius:2px;"></div>
<svg style="left:1560px;top:494px" width="40" height="40" viewBox="0 0 40 40"><rect x="7" y="12" width="26" height="7.4" fill="#1a1a1a"/><rect x="7" y="21" width="26" height="7.4" fill="#1a1a1a"/><g stroke="#bbb" stroke-width="0.8"><path d="M10 15.7H12.6M14 15.7H16.6M18.6 15.7H30M10 24.7H12.6M14 24.7H16.6M18.6 24.7H30"/></g></svg>
<div style="left:1605px;top:494px;width:40px;height:40px;background:#aaa;border-radius:2px;"></div>
<svg style="left:1605px;top:494px" width="40" height="40" viewBox="0 0 40 40"><rect x="7" y="12" width="26" height="7.4" fill="#1a1a1a"/><rect x="7" y="21" width="26" height="7.4" fill="#1a1a1a"/><g stroke="#bbb" stroke-width="0.8"><path d="M10 15.7H12.6M14 15.7H16.6M18.6 15.7H30M10 24.7H12.6M14 24.7H16.6M18.6 24.7H30"/></g></svg>
<div style="left:1650px;top:494px;width:40px;height:40px;background:#aaa;border-radius:2px;"></div>
<svg style="left:1650px;top:494px" width="40" height="40" viewBox="0 0 40 40"><rect x="7" y="12" width="26" height="7.4" fill="#1a1a1a"/><rect x="7" y="21" width="26" height="7.4" fill="#1a1a1a"/><g stroke="#bbb" stroke-width="0.8"><path d="M10 15.7H12.6M14 15.7H16.6M18.6 15.7H30M10 24.7H12.6M14 24.7H16.6M18.6 24.7H30"/></g></svg>
<div style="left:1695px;top:494px;width:40px;height:40px;border:1px dashed #8c8c8c;border-radius:2px;"></div>
<svg style="left:1707px;top:506px" width="16" height="16" viewBox="0 0 16 16"><path d="M8 2V14M2 8H14" stroke="#999" stroke-width="1.4" fill="none"/></svg>
</div></body></html>
